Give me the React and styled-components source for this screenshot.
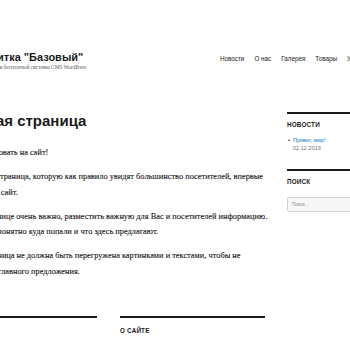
import React from "react";
import styled, { createGlobalStyle } from "styled-components";

const GlobalStyle = createGlobalStyle`
  html, body {
    margin: 0;
    padding: 0;
    background: #fff;
    overflow: hidden;
  }
`;

const Page = styled.div`
  margin-left: -48px;
  width: 460px;
  color: #1a1a1a;
  font-family: "Liberation Serif", "Times New Roman", serif;
`;

const Header = styled.header`
  display: flex;
  align-items: center;
  padding-top: 49px;
  height: 24px;
`;

const Branding = styled.div`
  flex: 0 0 268px;
  display: flex;
  flex-direction: column;
`;

const SiteTitle = styled.div`
  font-family: "Liberation Sans", Arial, sans-serif;
  font-weight: 700;
  font-size: 11px;
  line-height: 12px;
  white-space: nowrap;
  margin-left: -4px;
`;

const SiteDescription = styled.div`
  font-family: "Liberation Serif", "Times New Roman", serif;
  font-size: 5.3px;
  line-height: 8px;
  color: #5a5a5a;
  white-space: nowrap;
  margin-left: 1px;
`;

const Nav = styled.nav`
  display: flex;
  gap: 10px;
  margin-top: -6px;
`;

const NavLink = styled.a`
  font-family: "Liberation Sans", Arial, sans-serif;
  font-size: 6.3px;
  color: #1a1a1a;
  text-decoration: none;
  white-space: nowrap;
`;

const Main = styled.div`
  display: flex;
  margin-top: 39px;
`;

const Content = styled.main`
  flex: 0 0 318px;
`;

const Title = styled.h1`
  margin: 0;
  font-family: "Liberation Sans", Arial, sans-serif;
  font-size: 15px;
  line-height: 18px;
  font-weight: 700;
  white-space: nowrap;
`;

const Entry = styled.div`
  margin-top: 15px;
`;

const Para = styled.p`
  margin: 0 0 8.5px;
  font-family: "Liberation Serif", "Times New Roman", serif;
  font-size: 8.35px;
  line-height: 15.5px;
  color: #111;
  -webkit-text-stroke: 0.1px #111;
`;

const Sidebar = styled.aside`
  flex: 0 0 90px;
  margin-left: 17px;
`;

const Widget = styled.section`
  border-top: 2px solid #1a1a1a;
  margin-top: ${(p) => p.$offset || 0}px;
`;

const WidgetTitle = styled.h2`
  margin: 7px 0 0;
  font-family: "Liberation Sans", Arial, sans-serif;
  font-size: 6.3px;
  line-height: 8px;
  font-weight: 700;
  letter-spacing: 0.2px;
  white-space: nowrap;
`;

const NewsList = styled.ul`
  list-style: none;
  margin: 7px 0 0;
  padding: 0;
`;

const NewsItem = styled.li`
  display: flex;
  gap: 3px;
  font-family: "Liberation Sans", Arial, sans-serif;
  font-size: 5.5px;
  line-height: 8px;
`;

const Bullet = styled.span`
  color: #1a1a1a;
  margin-left: 1px;
`;

const NewsLink = styled.a`
  color: #007acc;
  text-decoration: none;
  white-space: nowrap;
`;

const NewsDate = styled.div`
  color: #686868;
  font-size: 5px;
  line-height: 8px;
  letter-spacing: 0.3px;
`;

const SearchBox = styled.div`
  margin-top: 11px;
  height: 13px;
  border: 1px solid #d1d1d1;
  border-radius: 2px;
  background: #f7f7f7;
  display: flex;
  align-items: center;
  padding-left: 4px;
  font-family: "Liberation Sans", Arial, sans-serif;
  font-size: 4.6px;
  color: #8a8a8a;
`;

const Footer = styled.footer`
  display: flex;
  gap: 23px;
  margin-top: 28px;
`;

const FooterWidget = styled.section`
  flex: 0 0 145px;
  border-top: 2px solid #1a1a1a;
`;

const FooterTitle = styled(WidgetTitle)`
  margin-top: 9px;
`;

const BottomBar = styled.div`
  margin-top: 17px;
  height: 3px;
  background: linear-gradient(#c8c8c8, #9a9a9a);
`;

export default function App() {
  return (
    <>
      <GlobalStyle />
      <Page>
        <Header>
          <Branding>
            <SiteTitle>Сайт-визитка "Базовый"</SiteTitle>
            <SiteDescription>Тема оформления для бесплатной системы CMS WordPress</SiteDescription>
          </Branding>
          <Nav>
            <NavLink>Новости</NavLink>
            <NavLink>О нас</NavLink>
            <NavLink>Галерея</NavLink>
            <NavLink>Товары</NavLink>
            <NavLink>Услуги</NavLink>
          </Nav>
        </Header>
        <Main>
          <Content>
            <Title>Главная страница</Title>
            <Entry>
              <Para>Добро пожаловать на сайт!</Para>
              <Para>
                Это главная страница, которую как правило увидят большинство посетителей, впервые
                зашедших на сайт.
              </Para>
              <Para>
                На этой странице очень важно, разместить важную для Вас и посетителей информацию.
                Чтобы было понятно куда попали и что здесь предлагают.
              </Para>
              <Para>
                Главная страница не должна быть перегружена картинками и текстами, чтобы не
                отвлекать от главного предложения.
              </Para>
            </Entry>
          </Content>
          <Sidebar>
            <Widget>
              <WidgetTitle>НОВОСТИ</WidgetTitle>
              <NewsList>
                <NewsItem>
                  <Bullet>•</Bullet>
                  <div>
                    <NewsLink>Привет, мир!</NewsLink>
                    <NewsDate>02.12.2019</NewsDate>
                  </div>
                </NewsItem>
              </NewsList>
            </Widget>
            <Widget $offset={17}>
              <WidgetTitle>ПОИСК</WidgetTitle>
              <SearchBox>Поиск…</SearchBox>
            </Widget>
          </Sidebar>
        </Main>
        <Footer>
          <FooterWidget>
            <FooterTitle>МЕТА</FooterTitle>
          </FooterWidget>
          <FooterWidget>
            <FooterTitle>О САЙТЕ</FooterTitle>
          </FooterWidget>
        </Footer>
        <BottomBar />
      </Page>
    </>
  );
}
